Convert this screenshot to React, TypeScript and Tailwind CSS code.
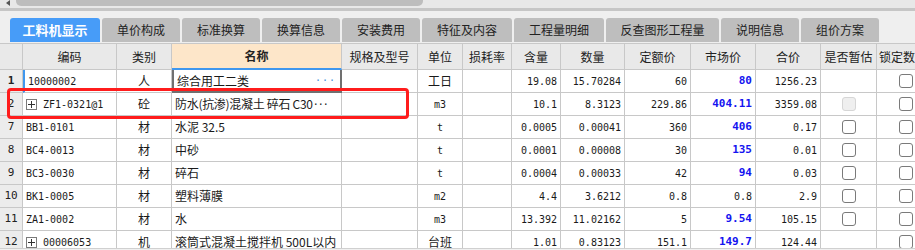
import React from 'react';

const CJK = "font-['Noto_Sans_CJK_SC',sans-serif]";
const MONO = "font-['DejaVu_Sans_Mono','Noto_Sans_CJK_SC',monospace]";

const tabs = [
  { label: '工料机显示', w: 'w-[90px]', active: true },
  { label: '单价构成', w: 'w-[78px]' },
  { label: '标准换算', w: 'w-[78px]' },
  { label: '换算信息', w: 'w-[78px]' },
  { label: '安装费用', w: 'w-[78px]' },
  { label: '特征及内容', w: 'w-[90px]' },
  { label: '工程量明细', w: 'w-[90px]' },
  { label: '反查图形工程量', w: 'w-[113px]' },
  { label: '说明信息', w: 'w-[78px]' },
  { label: '组价方案', w: 'w-[78px]' },
];

const headers = [
  '', '编码', '类别', '名称', '规格及型号', '单位', '损耗率', '含量', '数量',
  '定额价', '市场价', '合价', '是否暂估', '锁定数量',
];

interface Row {
  n: string;
  code: string;
  plus?: boolean;
  cat: string;
  name: string;
  more?: boolean;
  unit: string;
  qty: string;
  amt: string;
  quota: string;
  market: string;
  blue?: boolean;
  total: string;
  est: 'none' | 'disabled' | 'box';
  current?: boolean;
}

const rows: Row[] = [
  { n: '1', code: '10000002', cat: '人', name: '综合用工二类', unit: '工日', qty: '19.08', amt: '15.70284', quota: '60', market: '80', blue: true, total: '1256.23', est: 'none', current: true },
  { n: '2', code: 'ZF1-0321@1', plus: true, cat: '砼', name: '防水(抗渗)混凝土 碎石 C30', more: true, unit: 'm3', qty: '10.1', amt: '8.3123', quota: '229.86', market: '404.11', blue: true, total: '3359.08', est: 'disabled' },
  { n: '7', code: 'BB1-0101', cat: '材', name: '水泥 32.5', unit: 't', qty: '0.0005', amt: '0.00041', quota: '360', market: '406', blue: true, total: '0.17', est: 'box' },
  { n: '8', code: 'BC4-0013', cat: '材', name: '中砂', unit: 't', qty: '0.0001', amt: '0.00008', quota: '30', market: '135', blue: true, total: '0.01', est: 'box' },
  { n: '9', code: 'BC3-0030', cat: '材', name: '碎石', unit: 't', qty: '0.0004', amt: '0.00033', quota: '42', market: '94', blue: true, total: '0.03', est: 'box' },
  { n: '10', code: 'BK1-0005', cat: '材', name: '塑料薄膜', unit: 'm2', qty: '4.4', amt: '3.6212', quota: '0.8', market: '0.8', total: '2.9', est: 'box' },
  { n: '11', code: 'ZA1-0002', cat: '材', name: '水', unit: 'm3', qty: '13.392', amt: '11.02162', quota: '5', market: '9.54', blue: true, total: '105.15', est: 'box' },
  { n: '12', code: '00006053', plus: true, cat: '机', name: '滚筒式混凝土搅拌机 500L以内', unit: '台班', qty: '1.01', amt: '0.83123', quota: '151.1', market: '149.7', blue: true, total: '124.44', est: 'none' },
];

const cell = 'h-[23px] border-r border-b border-[#c8c8c8] flex items-center overflow-hidden whitespace-nowrap bg-white';
const num = `${cell} justify-end pr-[3px] ${MONO} text-[10px] text-[#1a1a1a]`;

const hasCjk = (s: string) => /[\u4e00-\u9fff]/.test(s);

const Checkbox = ({ disabled }: { disabled?: boolean }) => (
  <div
    className={
      disabled
        ? 'w-[14px] h-[14px] rounded-[3px] border border-[#d6d6d6] bg-[#efefef]'
        : 'w-[14px] h-[14px] rounded-[3px] border border-[#7a7a7a] bg-white'
    }
  />
);

const PlusBox = () => (
  <span className="inline-flex items-center justify-center w-[11px] h-[11px] border border-[#7a7a7a] mr-[6px] shrink-0">
    <svg width="9" height="9" viewBox="0 0 9 9">
      <path d="M4.5 1v7M1 4.5h7" stroke="#333" strokeWidth="1" />
    </svg>
  </span>
);

const App = () => {
  return (
    <div className="w-[915px] h-[250px] overflow-hidden bg-[#efefef] flex flex-col relative">
      {/* top scroll strip */}
      <div className="h-[8px] bg-[#e8e8e8] flex items-start shrink-0">
        <div className="w-[16px] h-[6px] flex items-center justify-center">
          <div className="w-0 h-0 border-y-[3px] border-y-transparent border-r-[4px] border-r-[#555]" />
        </div>
        <div className="w-[407px] h-[6px] bg-[#bdbdbd] rounded-b-[5px]" />
      </div>
      <div className="h-[3px] bg-[#c6c6c6] shrink-0" />

      {/* tabs */}
      <div className="h-[32px] flex items-end gap-[2px] px-[10px] pb-[1px] shrink-0">
        {tabs.map((t) => (
          <div
            key={t.label}
            className={`${t.w} h-[24px] rounded-t-[3px] flex items-center justify-center ${CJK} ${
              t.active
                ? 'bg-[#479cf8] text-white text-[13px] font-bold'
                : 'bg-[#bebebe] text-[#222] text-[12px]'
            }`}
          >
            {t.label}
          </div>
        ))}
      </div>

      {/* grid */}
      <div className="flex-1 min-h-0 overflow-hidden border-t border-[#c8c8c8]">
        <div className="grid grid-cols-[23px_94px_55px_170px_76px_45px_49px_49px_64px_66px_65px_65px_56px_58px] w-[930px]">
          {headers.map((h, i) => (
            <div
              key={i}
              className={`h-[26px] border-r border-b border-[#c8c8c8] flex items-center whitespace-nowrap overflow-hidden ${CJK} text-[12px] text-[#222] ${
                i === 3
                  ? 'bg-[#fde6c9] font-bold justify-center border-b-2 border-b-[#3f97ee]'
                  : i === 13
                  ? 'bg-[#e9e9e9] justify-start pl-[2px]'
                  : 'bg-[#e9e9e9] justify-center'
              }`}
            >
              {h}
            </div>
          ))}

          {rows.map((r) => (
            <React.Fragment key={r.n}>
              <div
                className={`${cell} !bg-[#ececec] justify-center ${MONO} text-[11px] text-[#222] ${
                  r.current ? 'font-bold' : ''
                }`}
              >
                {r.n}
              </div>
              <div
                className={`${cell} pl-[3px] ${MONO} text-[10px] text-[#1a1a1a] ${
                  r.current ? 'border-l-2 border-l-[#3f97ee] pl-[1px]' : ''
                }`}
              >
                {r.plus && <PlusBox />}
                {r.code}
              </div>
              <div className={`${cell} justify-center ${CJK} text-[12px] text-[#1a1a1a]`}>{r.cat}</div>
              <div
                className={`${cell} pl-[3px] ${CJK} text-[12px] text-[#1a1a1a] ${
                  r.current ? 'border-l-2 border-l-[#707070] border-r-2 border-r-[#707070] border-b-2 border-b-[#707070] pl-[2px] pr-[4px] justify-between' : ''
                }`}
              >
                <span className={r.more ? 'tracking-[-0.3px]' : ''}>{r.name}</span>
                {r.more && <span className={`${MONO} text-[10px] tracking-[-1px]`}>···</span>}
                {r.current && <span className={`text-[#3f8fdc] ${MONO} text-[10px] tracking-[1px]`}>···</span>}
              </div>
              <div className={cell} />
              <div
                className={`${cell} justify-center text-[#1a1a1a] ${
                  hasCjk(r.unit) ? `${CJK} text-[12px]` : `${MONO} text-[10px]`
                }`}
              >
                {r.unit}
              </div>
              <div className={cell} />
              <div className={num}>{r.qty}</div>
              <div className={num}>{r.amt}</div>
              <div className={num}>{r.quota}</div>
              <div className={r.blue ? `${num} !text-[#1414f0] !text-[11px] font-bold` : num}>{r.market}</div>
              <div className={num}>{r.total}</div>
              <div className={`${cell} justify-center`}>
                {r.est === 'box' && <Checkbox />}
                {r.est === 'disabled' && <Checkbox disabled />}
              </div>
              <div className={`${cell} justify-center`}>
                <Checkbox />
              </div>
            </React.Fragment>
          ))}
        </div>
      </div>
      <div className="h-[2px] bg-[#f0f0f0] border-t border-[#d0d0d0] shrink-0" />

      {/* red annotation box */}
      <div className="absolute left-[7px] top-[88px] w-[402px] h-[31px] border-[3px] border-[#ff1c1c] rounded-[4px] pointer-events-none" />
    </div>
  );
};

export default App;
